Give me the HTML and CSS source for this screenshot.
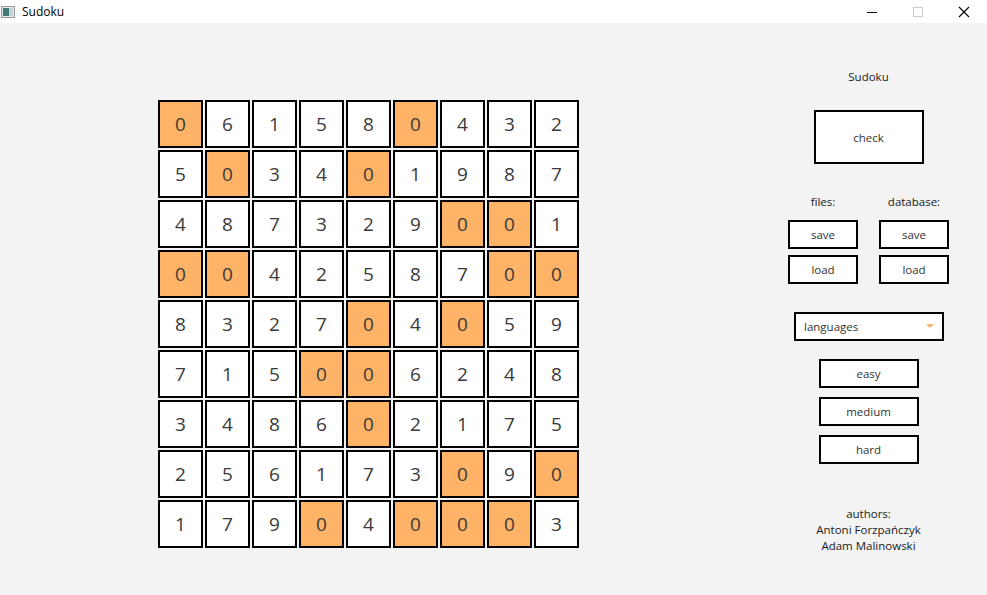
FILE: index.html
```html
<!DOCTYPE html>
<html>
<head>
<meta charset="utf-8">
<title>Sudoku</title>
<link rel="stylesheet" href="styles.css">
</head>
<body>
<div class="window">
  <div class="titlebar">
    <div class="title-left">
      <svg class="app-icon" width="14" height="12" viewBox="0 0 14 12">
        <rect x="0.5" y="0.5" width="13" height="11" fill="#e8e8e8" stroke="#9a9a9a"/>
        <rect x="2" y="2" width="6" height="8" fill="#3f7a78"/>
        <rect x="8" y="2" width="4" height="8" fill="#c8d4d4"/>
      </svg>
      <span class="title-text">Sudoku</span>
    </div>
    <div class="controls">
      <span class="ctrl"><svg width="12" height="12" viewBox="0 0 12 12"><line x1="1" y1="6.5" x2="11" y2="6.5" stroke="#000" stroke-width="1"/></svg></span>
      <span class="ctrl"><svg width="12" height="12" viewBox="0 0 12 12"><rect x="1.5" y="1.5" width="9" height="9" fill="none" stroke="#cccccc" stroke-width="1"/></svg></span>
      <span class="ctrl"><svg width="12" height="12" viewBox="0 0 12 12"><path d="M1 1 L11 11 M11 1 L1 11" stroke="#000" stroke-width="1.1"/></svg></span>
    </div>
  </div>
  <div class="content">
    <div class="board">
      <div class="cell z">0</div><div class="cell">6</div><div class="cell">1</div><div class="cell">5</div><div class="cell">8</div><div class="cell z">0</div><div class="cell">4</div><div class="cell">3</div><div class="cell">2</div>
      <div class="cell">5</div><div class="cell z">0</div><div class="cell">3</div><div class="cell">4</div><div class="cell z">0</div><div class="cell">1</div><div class="cell">9</div><div class="cell">8</div><div class="cell">7</div>
      <div class="cell">4</div><div class="cell">8</div><div class="cell">7</div><div class="cell">3</div><div class="cell">2</div><div class="cell">9</div><div class="cell z">0</div><div class="cell z">0</div><div class="cell">1</div>
      <div class="cell z">0</div><div class="cell z">0</div><div class="cell">4</div><div class="cell">2</div><div class="cell">5</div><div class="cell">8</div><div class="cell">7</div><div class="cell z">0</div><div class="cell z">0</div>
      <div class="cell">8</div><div class="cell">3</div><div class="cell">2</div><div class="cell">7</div><div class="cell z">0</div><div class="cell">4</div><div class="cell z">0</div><div class="cell">5</div><div class="cell">9</div>
      <div class="cell">7</div><div class="cell">1</div><div class="cell">5</div><div class="cell z">0</div><div class="cell z">0</div><div class="cell">6</div><div class="cell">2</div><div class="cell">4</div><div class="cell">8</div>
      <div class="cell">3</div><div class="cell">4</div><div class="cell">8</div><div class="cell">6</div><div class="cell z">0</div><div class="cell">2</div><div class="cell">1</div><div class="cell">7</div><div class="cell">5</div>
      <div class="cell">2</div><div class="cell">5</div><div class="cell">6</div><div class="cell">1</div><div class="cell">7</div><div class="cell">3</div><div class="cell z">0</div><div class="cell">9</div><div class="cell z">0</div>
      <div class="cell">1</div><div class="cell">7</div><div class="cell">9</div><div class="cell z">0</div><div class="cell">4</div><div class="cell z">0</div><div class="cell z">0</div><div class="cell z">0</div><div class="cell">3</div>
    </div>
    <div class="panel">
      <div class="heading">Sudoku</div>
      <div class="btn check">check</div>
      <div class="io">
        <div class="io-col">
          <div class="io-label">files:</div>
          <div class="btn small">save</div>
          <div class="btn small">load</div>
        </div>
        <div class="io-col">
          <div class="io-label">database:</div>
          <div class="btn small">save</div>
          <div class="btn small">load</div>
        </div>
      </div>
      <div class="combo">
        <span class="combo-text">languages</span>
        <svg class="combo-arrow" width="8" height="5" viewBox="0 0 8 5"><path d="M0 0 L8 0 L4 4 Z" fill="#ffb366"/></svg>
      </div>
      <div class="levels">
        <div class="btn level">easy</div>
        <div class="btn level">medium</div>
        <div class="btn level">hard</div>
      </div>
      <div class="authors">
        <div>authors:</div>
        <div>Antoni Forzpańczyk</div>
        <div>Adam Malinowski</div>
      </div>
    </div>
  </div>
</div>
</body>
</html>
```

FILE: styles.css
```css
html, body {
  margin: 0;
  padding: 0;
}
body {
  width: 987px;
  height: 595px;
  overflow: hidden;
  background: #f3f3f3;
  font-family: "Open Sans", "Noto Sans", sans-serif;
  color: #000;
}
.window {
  width: 987px;
  height: 595px;
  display: flex;
  flex-direction: column;
}
.titlebar {
  height: 23px;
  background: #ffffff;
  display: flex;
  justify-content: space-between;
  align-items: center;
}
.title-left {
  display: flex;
  align-items: center;
  padding-left: 1px;
}
.app-icon {
  display: block;
  margin-right: 7px;
}
.title-text {
  font-size: 12px;
  line-height: 16px;
  color: #000;
}
.controls {
  display: flex;
  height: 23px;
  align-items: center;
}
.ctrl {
  width: 46px;
  height: 23px;
  display: flex;
  align-items: center;
  justify-content: center;
}
.ctrl svg {
  display: block;
}
.content {
  flex: 1;
  display: flex;
  align-items: flex-start;
}
.board {
  margin-left: 158px;
  margin-top: 77px;
  display: grid;
  grid-template-columns: repeat(9, 45px);
  grid-template-rows: repeat(9, 48px);
  column-gap: 2px;
  row-gap: 2px;
}
.cell {
  box-sizing: border-box;
  border: 2px solid #000;
  background: #ffffff;
  display: flex;
  align-items: center;
  justify-content: center;
  font-size: 19px;
  color: #3a3a3a;
}
.cell.z {
  background: #ffb366;
}
.panel {
  margin-left: 209px;
  width: 161px;
  display: flex;
  flex-direction: column;
  align-items: center;
  font-size: 11.5px;
}
.heading {
  margin-top: 46px;
  line-height: 16px;
  color: #1a1a1a;
}
.btn {
  box-sizing: border-box;
  border: 2px solid #000;
  background: #ffffff;
  display: flex;
  align-items: center;
  justify-content: center;
  color: #333;
  font-size: 11.5px;
}
.check {
  margin-top: 25px;
  width: 110px;
  height: 54px;
}
.io {
  margin-top: 30px;
  display: flex;
  gap: 21px;
}
.io-col {
  display: flex;
  flex-direction: column;
  align-items: center;
}
.io-label {
  line-height: 16px;
  height: 16px;
  margin-bottom: 10px;
  color: #1a1a1a;
}
.small {
  width: 70px;
  height: 29px;
}
.small + .small {
  margin-top: 6px;
}
.combo {
  box-sizing: border-box;
  margin-top: 28px;
  margin-left: 1px;
  width: 150px;
  height: 29px;
  border: 2px solid #000;
  background: #ffffff;
  display: flex;
  align-items: center;
  justify-content: space-between;
  padding: 0 8px 0 8px;
}
.combo-text {
  color: #333;
  font-size: 11.5px;
}
.combo-arrow {
  display: block;
}
.levels {
  margin-top: 18px;
  display: flex;
  flex-direction: column;
  gap: 9px;
  align-items: center;
}
.level {
  width: 100px;
  height: 29px;
}
.authors {
  margin-top: 42px;
  display: flex;
  flex-direction: column;
  align-items: center;
  line-height: 16px;
  color: #1a1a1a;
}
```
